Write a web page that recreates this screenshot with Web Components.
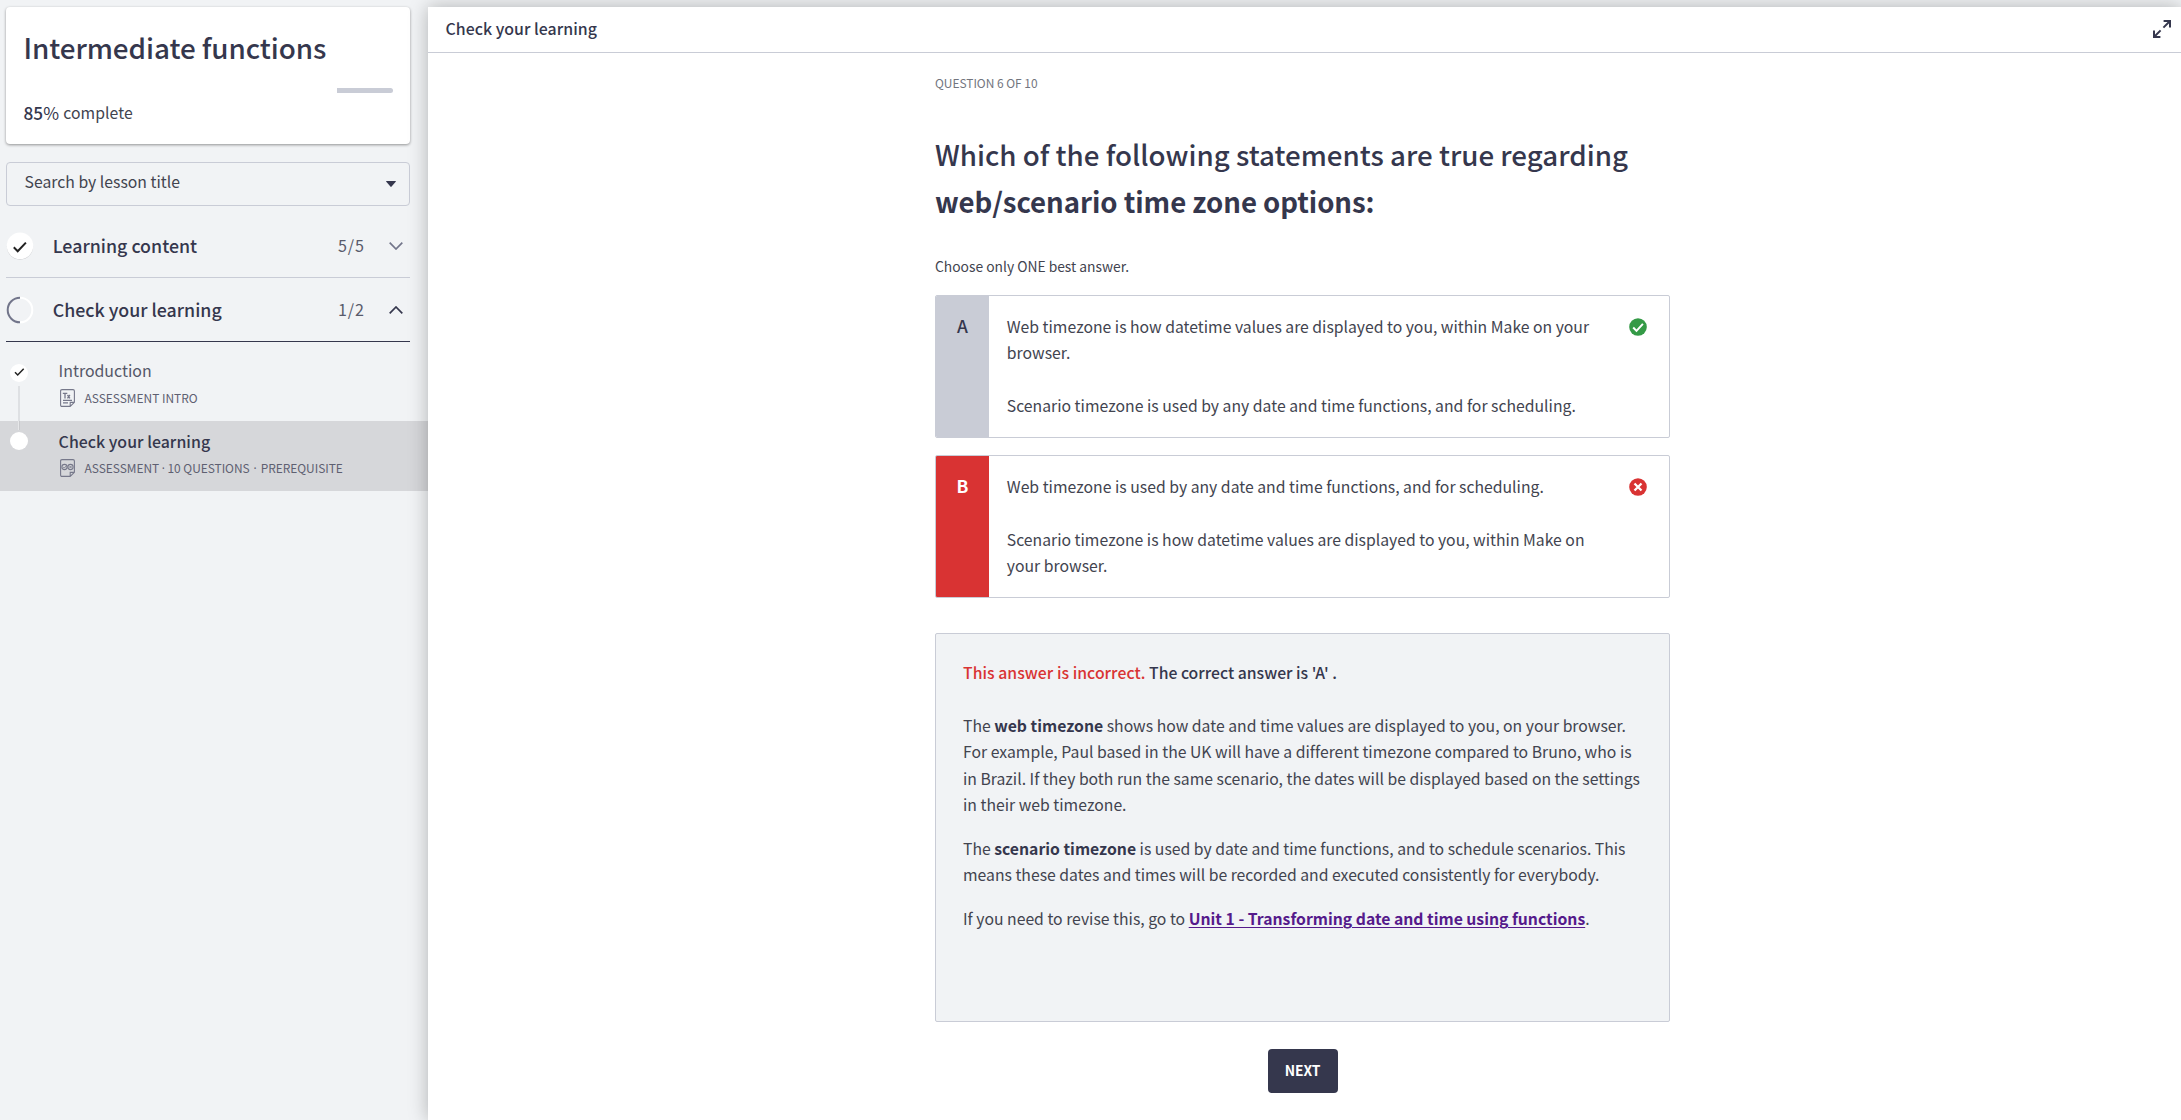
<!DOCTYPE html>
<html lang="en"><head><meta charset="utf-8"><title>Intermediate functions</title>
<style>
html,body{margin:0;height:100%}
body{background:#f1f3f5;color:#35374d;font-family:"Noto Sans CJK SC","Source Sans Pro","Open Sans",sans-serif;overflow:hidden}
</style></head><body>
<course-app></course-app>
<script>
const define=(name,html,setup)=>customElements.define(name,class extends HTMLElement{
  connectedCallback(){
    if(this.shadowRoot)return;
    const t=document.createElement('template');
    t.innerHTML=typeof html==='function'?html(this):html;
    this.attachShadow({mode:'open'}).append(t.content.cloneNode(true));
    if(setup)setup(this);
  }
});

// One line of text: size, line height, weight, and the width its tracking is adjusted to.
define('text-line',e=>`<style>:host{display:block;white-space:nowrap;font-size:${e.getAttribute('size')||15.75}px;line-height:${e.getAttribute('lh')||26.4}px;font-weight:${e.getAttribute('weight')||400}}span{display:inline-block;vertical-align:top}</style><span><slot></slot></span>`,e=>{
  const w=+e.getAttribute('fit');if(!w)return;
  const s=e.shadowRoot.querySelector('span'),n=e.textContent.length,r=s.getBoundingClientRect().width;
  s.style.letterSpacing=((w-r)/n).toFixed(4)+'px';
});

define('course-card',`<style>
:host{display:block;box-sizing:border-box;width:404px;height:137px;padding:19.5px 17px 0 17.4px;background:#fff;border-radius:4px;box-shadow:0 1px 3px rgba(0,0,0,.4)}
.bar{height:5px;margin:21.5px 0 8px;display:flex;justify-content:flex-end}
.bar i{width:56px;background:#c9ccd6;border-radius:0 3px 3px 0}
.row{display:flex;color:#42444f}.n{color:#35374d}b{font-weight:500}</style>
<text-line size="27.8" lh="40" weight="500" fit="303">Intermediate functions</text-line>
<div class="bar"><i></i></div>
<div class="row"><text-line class="n" size="17.2" lh="24" fit="40">
<b>85</b>%&nbsp;</text-line><text-line lh="24" fit="69.5">complete</text-line></div>`);

define('lesson-search',`<style>
:host{display:flex;box-sizing:border-box;width:404px;height:44px;margin-top:18px;padding:0 13px 1px 17.5px;border:1px solid #c9ccd6;border-radius:4px;align-items:center;justify-content:space-between;color:#42444f}
text-line{margin-top:-2px}svg{display:block}</style>
<text-line fit="155.5">Search by lesson title</text-line>
<svg width="10" height="6"><path d="M.6 0H9.4Q10.3 0 9.7.8L5.6 5.6Q5 6.2 4.4 5.6L.3.8Q-.3 0 .6 0Z" fill="#35374d"/></svg>`);

define('section-row',e=>{const open=e.hasAttribute('open');return `<style>
:host{display:flex;box-sizing:border-box;width:404px;height:64px;border-bottom:1px solid ${open?'#35374d':'#c9ccd6'};align-items:center}
svg{display:block;flex:none}.t{margin-left:18.7px;flex:1}.n{color:#595b6b;margin-right:24px}.v{margin-right:7px}</style>
${open?`<svg width="28" height="28" viewBox="0 0 28 28" fill="none" stroke-width="2"><path d="M14 1.7a12.3 12.3 0 0 1 0 24.6" stroke="#fff"/><path d="M14 1.7a12.3 12.3 0 0 0 0 24.6" stroke="#72758a"/></svg>`
:`<svg width="28" height="28" viewBox="0 0 28 28"><circle cx="14" cy="14.4" r="13.1" fill="#c5c6c9"/><circle cx="14" cy="13.8" r="13.3" fill="#fff"/><path d="M7.8 15.3l3.9 3.9 8.2-8.6" fill="none" stroke="#222" stroke-width="2"/></svg>`}
<text-line class="t" size="17.8" weight="500" fit="${e.getAttribute('fit')}">${e.getAttribute('label')}</text-line>
<text-line class="n" size="16.1" fit="27">${e.getAttribute('count')}</text-line>
<svg class="v" width="14" height="8" viewBox="0 0 14 8" fill="none" stroke="${open?'#35374d':'#72758a'}" stroke-width="1.7"><path d="${open?'M.7 7.3L7 1l6.3 6.3':'M.7.7L7 7 13.3.7'}"/></svg>`});

define('lesson-item',e=>{const on=e.hasAttribute('current');return `<style>
:host{display:flex;box-sizing:border-box;width:428px;height:70px;margin-left:-6px;padding-left:9px;${on?'background:#d6d7da;':''}}
.rail{width:20px;margin-right:29.6px;display:flex;flex-direction:column;align-items:center}
.rail svg{display:block;flex:none;margin-left:-1px}.line{width:2px;background:${on?'linear-gradient(90deg,#e6e7e9 50%,#c9cacd 50%)':'#dee0e3'}}
.body{padding-top:${on?8:7.4}px}.meta{display:flex;gap:10px;margin-top:${on?2.4:3}px;padding-left:1px;color:#5e6071}
.t{color:${on?'#35374d':'#555768'}}.meta svg{margin-top:1.6px}</style>
<div class="rail">${on?'<div class="line" style="height:9px;margin-bottom:2px"></div>':'<div style="height:13px"></div>'}
<svg width="18" height="18" viewBox="0 0 18 18"><circle cx="9" cy="9" r="9" fill="#fff"/>${on?'':'<path d="M5 8.3l2.7 2.7 6-6.2" fill="none" stroke="#222" stroke-width="1.5"/>'}</svg>
${on?'':'<div class="line" style="height:35px;margin-top:4px"></div>'}</div>
<div class="body"><text-line class="t" size="15.9" weight="${on?500:400}" fit="${e.getAttribute('fit')}">${e.getAttribute('label')}</text-line>
<div class="meta"><svg width="15" height="18" viewBox="0 0 15 18" fill="none" stroke="#76788a" stroke-width="1.1"><path d="M10 17.4H2Q.6 17.4.6 16V2Q.6.6 2 .6h11Q14.4.6 14.4 2v11.3l-4.2 4.1v-4h4"/>
${on?'<circle cx="4.5" cy="8" r="2.6"/><circle cx="10.5" cy="8" r="2.6"/><path d="M3.2 7.9l1.1 1.2 2-2.2M9.3 6.8l2.4 2.4M11.7 6.8L9.3 9.2" stroke-width=".9"/>':'<path d="M2.8 4.4h4.5M5 4.4v5M7.5 6l2.4 3.3M9.9 6L7.5 9.3" stroke-width="1.3"/><path d="M3 11.4h9M3 13.9h5"/>'}</svg>
<slot></slot></div></div>`});

define('answer-option',e=>{const bad=e.hasAttribute('wrong');return `<style>
:host{display:flex;box-sizing:border-box;height:143px;border:1px solid #c9ccd6;border-radius:2px;background:#fff;overflow:hidden;color:#42444f}
.k{width:53px;flex:none;box-sizing:border-box;padding-top:17.5px;text-align:center;background:${bad?'#d93333':'#c9ccd6'};color:${bad?'#fff':'#35374d'}}
.x{flex:1;padding:18px 0 0 17.8px}svg{display:block;margin:22px 21.6px 0 0}</style>
<text-line class="k" size="17.5" weight="${bad?700:500}">${e.getAttribute('key')}</text-line>
<div class="x"><slot></slot></div>
<svg width="18" height="18" viewBox="0 0 18 18"><circle cx="9" cy="9" r="8.8" fill="${bad?'#d93333':'#349a46'}"/><path d="${bad?'M5.5 5.5l7 7M12.5 5.5l-7 7':'M4.2 9.5l3.3 3.4 6.4-7'}" fill="none" stroke="#fff" stroke-width="${bad?2.3:2}"/></svg>`});

define('answer-feedback',`<style>
:host{display:block;box-sizing:border-box;height:389px;margin-top:35px;padding:26.3px 0 0 27px;background:#f1f3f5;border:1px solid #c9ccd6;border-radius:2px;color:#42444f}
.h{margin-bottom:26.4px}.r{color:#d93333}.d{color:#35374d}b{font-weight:700;color:#35374d}.p{margin-bottom:17.4px}
.row{display:flex}a{color:#551a8b;font-weight:700;text-decoration:underline;text-underline-offset:2px;text-decoration-thickness:1px}</style>
<div class="row h"><text-line class="r" weight="500" fit="186">This answer is incorrect.&nbsp;</text-line><text-line class="d" weight="500" fit="188">The correct answer is 'A' .</text-line></div>
<div class="p"><text-line fit="663">The <b>web timezone</b> shows how date and time values are displayed to you, on your browser.</text-line>
<text-line fit="668.5">For example, Paul based in the UK will have a different timezone compared to Bruno, who is</text-line>
<text-line fit="677">in Brazil. If they both run the same scenario, the dates will be displayed based on the settings</text-line>
<text-line fit="163.5">in their web timezone.</text-line></div>
<div class="p"><text-line fit="662.5">The <b>scenario timezone</b> is used by date and time functions, and to schedule scenarios. This</text-line>
<text-line fit="636.5">means these dates and times will be recorded and executed consistently for everybody.</text-line></div>
<div class="row"><text-line fit="225.7">If you need to revise this, go to&nbsp;</text-line><text-line fit="396.5"><a>Unit 1 - Transforming date and time using functions</a></text-line><text-line>.</text-line></div>`);

define('quiz-question',`<style>
:host{display:block;width:735px;padding:19.5px 0 0 507px}
.q{color:#72757e}.h{margin-top:38.7px}.c{margin:30.9px 0 18.9px;color:#42444f}
answer-option+answer-option{margin-top:17px}
button{display:block;width:70px;height:44px;margin:27px auto 0;padding:0 0 1px;border:0;border-radius:4px;background:#35374d;color:#fff;font-family:inherit}
button text-line{text-align:center}</style>
<text-line class="q" size="11.95" lh="20" fit="102.5">QUESTION 6 OF 10</text-line>
<div class="h"><text-line size="27.7" lh="47" weight="500" fit="693">Which of the following statements are true regarding</text-line>
<text-line size="27.6" lh="47" weight="700" fit="439.5">web/scenario time zone options:</text-line></div>
<text-line class="c" size="13.85" lh="20" fit="194">Choose only ONE best answer.</text-line>
<answer-option key="A"><text-line fit="582.2">Web timezone is how datetime values are displayed to you, within Make on your</text-line><text-line fit="63.5">browser.</text-line><text-line>&nbsp;</text-line><text-line fit="569">Scenario timezone is used by any date and time functions, and for scheduling.</text-line></answer-option>
<answer-option key="B" wrong><text-line fit="537">Web timezone is used by any date and time functions, and for scheduling.</text-line><text-line>&nbsp;</text-line><text-line fit="577.7">Scenario timezone is how datetime values are displayed to you, within Make on</text-line><text-line fit="100.5">your browser.</text-line></answer-option>
<answer-feedback></answer-feedback>
<button><text-line size="13.85" weight="700" fit="35.7">NEXT</text-line></button>`);

define('course-app',`<style>
:host{display:flex;height:1120px;overflow:hidden}
aside{width:428px;flex:none;box-sizing:border-box;padding:7px 0 0 6px}
.first{margin-top:8px}.list{padding-top:9px}
.dot{font-family:"Open Sans",sans-serif}.parts{display:flex;gap:4px}
main{flex:1;margin-top:7px;background:#fff;box-shadow:0 0 18px rgba(0,0,0,.27);position:relative}
header{display:flex;box-sizing:border-box;height:46px;padding:0 10px 0 17.5px;border-bottom:1px solid #c9ccd6;align-items:center;justify-content:space-between}
header svg{margin-top:-1px}</style>
<aside><course-card></course-card><lesson-search></lesson-search>
<section-row class="first" label="Learning content" count="5/5" fit="144.5"></section-row>
<section-row open label="Check your learning" count="1/2" fit="169"></section-row>
<div class="list"><lesson-item label="Introduction" fit="93"><text-line size="11.95" lh="20" fit="113">ASSESSMENT INTRO</text-line></lesson-item>
<lesson-item current label="Check your learning" fit="151.5"><div class="parts"><text-line size="11.95" lh="20" fit="165">ASSESSMENT <span class="dot">·</span> 10 QUESTIONS</text-line><text-line size="11.95" lh="20"><span class="dot">·</span></text-line><text-line size="11.95" lh="20" fit="82">PREREQUISITE</text-line></div></lesson-item></div></aside>
<main><header><text-line size="15.9" weight="500" fit="151.5">Check your learning</text-line>
<svg width="18" height="18" viewBox="0 0 18 18" fill="none" stroke="#35374d" stroke-width="2"><path d="M10.6 1H17v6.4M17 1l-6.6 6.6M7.4 17H1v-6.4M1 17l6.6-6.6"/></svg></header>
<quiz-question></quiz-question></main>`);
</script></body></html>
